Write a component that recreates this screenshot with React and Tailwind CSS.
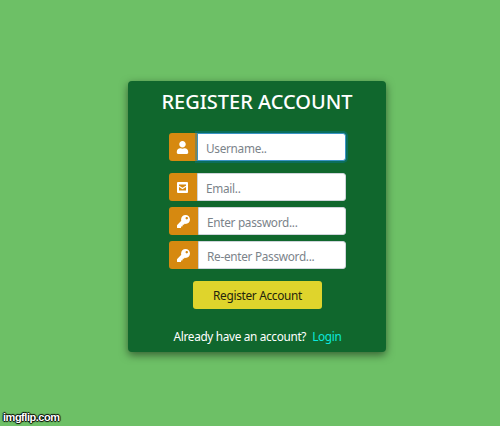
import { FaUser, FaKey } from "react-icons/fa";

function MailSquare({ className }) {
  return (
    <svg viewBox="0 0 11 11" className={className} aria-hidden="true">
      <rect width="11" height="11" rx="1" fill="currentColor" />
      <rect x="2" y="2.5" width="7" height="6" fill="#d68910" />
      <path d="M2 4.2 L5.5 6.5 L9 4.2" fill="none" stroke="currentColor" strokeWidth="1.1" />
    </svg>
  );
}

function Field({ icon: Icon, iconClass, addonClass, inputClass, ...props }) {
  return (
    <div className="flex h-7 w-[177px]">
      <span className={`flex shrink-0 items-center justify-center rounded-l-[3px] bg-[#d68910] text-white ${addonClass}`}>
        <Icon className={iconClass} />
      </span>
      <input
        className={`min-w-0 flex-1 rounded-r-[3px] border bg-white pt-[3px] pl-[8.5px] text-[11.8px] tracking-[-0.3px] text-gray-700 outline-none placeholder:text-[#7b838a] ${inputClass}`}
        {...props}
      />
    </div>
  );
}

export default function App() {
  return (
    <div className="flex h-[426px] w-[500px] flex-col overflow-hidden bg-[#6dc066] font-['Noto_Sans',sans-serif]">
      <main className="mt-[81px] ml-32 flex h-[271px] w-[258px] flex-col items-center rounded bg-[#10672d] shadow-[0_3px_8px_rgba(0,0,0,0.5)]">
        <h1 className="mt-[7px] h-7 text-[20px] leading-7 font-[550] whitespace-nowrap text-white">REGISTER ACCOUNT</h1>
        <form className="mt-[17px] flex flex-col items-center">
          <Field icon={FaUser} iconClass="h-[13px] w-[13px]" addonClass="w-7 pr-px" placeholder="Username.." type="text"
            inputClass="border-[#3b93c4] shadow-[0_0_0_2px_rgba(0,123,180,0.35)]" />
          <div className="mt-3 flex flex-col gap-1.5">
            <Field icon={MailSquare} iconClass="h-[11px] w-[11px]" addonClass="w-7 pt-px pr-px" placeholder="Email.." type="email"
              inputClass="border-[#ced4da]" />
            <Field icon={FaKey} iconClass="h-[13px] w-[13px]" addonClass="w-[29px]" placeholder="Enter password..." type="password"
              inputClass="border-[#ced4da]" />
            <Field icon={FaKey} iconClass="h-[13px] w-[13px]" addonClass="w-[29px]" placeholder="Re-enter Password..." type="password"
              inputClass="border-[#ced4da]" />
          </div>
          <button type="button" className="mt-3 h-7 w-[129px] rounded-[3px] bg-[#dfd42c] pt-px pl-px text-[11.8px] tracking-[-0.3px] text-[#24250d]">Register Account</button>
        </form>
        <p className="mt-[19px] flex gap-[6px] pl-px text-[11.8px] leading-4 tracking-[-0.33px] whitespace-nowrap text-white">
          <span>Already have an account?</span>
          <a className="text-[#0ce8dc]">Login</a>
        </p>
      </main>
      <footer className="mt-auto mb-px ml-[3px] h-4 font-['Liberation_Sans',sans-serif] text-[11px] leading-4 font-bold tracking-[-0.48px] text-white [text-shadow:1px_0_1px_#000,-1px_0_1px_#000,0_1px_1px_#000,0_-1px_1px_#000]">imgflip.com</footer>
    </div>
  );
}
